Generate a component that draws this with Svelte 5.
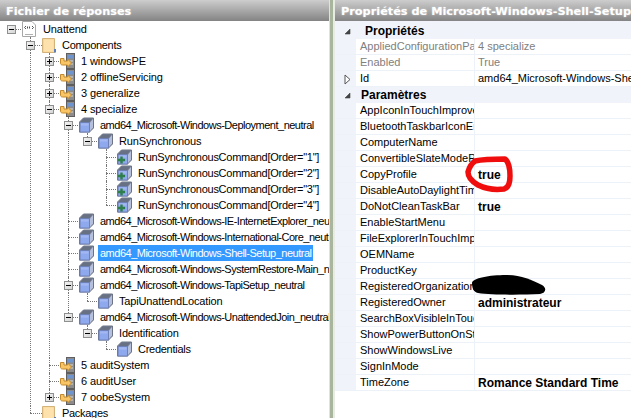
<script>
	// level: depth in the tree, exp: expander state, icon: which glyph to draw
	const nodes = [
		{ level: 0, text: 'Unattend', exp: '-', icon: 'doc' },
		{ level: 1, text: 'Components', exp: '-', icon: 'folder' },
		{ level: 2, text: '1 windowsPE', exp: '+', icon: 'pass' },
		{ level: 2, text: '2 offlineServicing', exp: '+', icon: 'pass' },
		{ level: 2, text: '3 generalize', exp: '+', icon: 'pass' },
		{ level: 2, text: '4 specialize', exp: '-', icon: 'pass' },
		{ level: 3, text: 'amd64_Microsoft-Windows-Deployment_neutral', exp: '-', icon: 'cube' },
		{ level: 4, text: 'RunSynchronous', exp: '-', icon: 'cube' },
		{ level: 5, text: 'RunSynchronousCommand[Order="1"]', icon: 'add' },
		{ level: 5, text: 'RunSynchronousCommand[Order="2"]', icon: 'add' },
		{ level: 5, text: 'RunSynchronousCommand[Order="3"]', icon: 'add' },
		{ level: 5, text: 'RunSynchronousCommand[Order="4"]', icon: 'add' },
		{ level: 3, text: 'amd64_Microsoft-Windows-IE-InternetExplorer_neutral', icon: 'cube' },
		{ level: 3, text: 'amd64_Microsoft-Windows-International-Core_neutral', icon: 'cube' },
		{ level: 3, text: 'amd64_Microsoft-Windows-Shell-Setup_neutral', icon: 'cube', selected: true },
		{ level: 3, text: 'amd64_Microsoft-Windows-SystemRestore-Main_neutral', icon: 'cube' },
		{ level: 3, text: 'amd64_Microsoft-Windows-TapiSetup_neutral', exp: '-', icon: 'cube' },
		{ level: 4, text: 'TapiUnattendLocation', icon: 'cube' },
		{ level: 3, text: 'amd64_Microsoft-Windows-UnattendedJoin_neutral', exp: '-', icon: 'cube' },
		{ level: 4, text: 'Identification', exp: '-', icon: 'cube' },
		{ level: 5, text: 'Credentials', icon: 'cube' },
		{ level: 2, text: '5 auditSystem', icon: 'pass' },
		{ level: 2, text: '6 auditUser', icon: 'pass' },
		{ level: 2, text: '7 oobeSystem', exp: '+', icon: 'pass' },
		{ level: 1, text: 'Packages', icon: 'folder' }
	];

	// Liberation runs a bit wider than the original font, more so on the long names
	const tracking = [-0.1, -0.3, -0.1, -0.5, -0.15, -0.27];

	// a guide runs down at a depth while a later sibling is still to come
	function hasLaterSibling(index, level) {
		for (let i = index + 1; i < nodes.length; i++) {
			if (nodes[i].level < level) return false;
			if (nodes[i].level === level) return true;
		}
		return false;
	}

	const rows = nodes.map((node, index) => {
		const guides = [];
		for (let d = 0; d < node.level; d++) guides.push(hasLaterSibling(index, d));
		return { ...node, guides, last: !hasLaterSibling(index, node.level) };
	});

	const groups = [
		{
			title: 'Propriétés',
			indent: true,
			props: [
				{ name: 'AppliedConfigurationPass', value: '4 specialize', dim: true },
				{ name: 'Enabled', value: 'True', dim: true },
				{ name: 'Id', value: 'amd64_Microsoft-Windows-Shell-Setup_neutral', arrow: true }
			]
		},
		{
			title: 'Paramètres',
			props: [
				{ name: 'AppIconInTouchImprovements' },
				{ name: 'BluetoothTaskbarIconEnabled' },
				{ name: 'ComputerName' },
				{ name: 'ConvertibleSlateModePromptPreference' },
				{ name: 'CopyProfile', value: 'true', bold: true },
				{ name: 'DisableAutoDaylightTimeSet' },
				{ name: 'DoNotCleanTaskBar', value: 'true', bold: true },
				{ name: 'EnableStartMenu' },
				{ name: 'FileExplorerInTouchImprovement' },
				{ name: 'OEMName' },
				{ name: 'ProductKey' },
				{ name: 'RegisteredOrganization' },
				{ name: 'RegisteredOwner', value: 'administrateur', bold: true },
				{ name: 'SearchBoxVisibleInTouchImprovement' },
				{ name: 'ShowPowerButtonOnStartScreen' },
				{ name: 'ShowWindowsLive' },
				{ name: 'SignInMode' },
				{ name: 'TimeZone', value: 'Romance Standard Time', bold: true }
			]
		}
	];
</script>

{#snippet cube()}
	<g transform="translate(1 -.5)">
		<path d="M1.5 5.5 L5.5 1.5 H15.5 V11.5 L11.5 15.5 H1.5 Z" fill="#7d8496" stroke="#6d7486" />
		<rect x="2" y="6" width="9.5" height="9.5" fill="#8fa9ee" stroke="#6f80b4" />
		<path d="M3 7 H10.5 V9 H3 Z" fill="#a3b8f2" />
		<path d="M12 6 L15 2.5 V11 L12 14.5 Z" fill="#b4c0dc" />
		<path d="M2.5 5.5 L5.5 2 H14.5 L11.5 5.5 Z" fill="#687084" />
	</g>
{/snippet}

{#snippet icon(kind)}
	<svg class="icon" width="18" height="16" viewBox="0 0 18 16">
		{#if kind === 'doc'}
			<path d="M2.5 .5 H12 L15.5 4 V15.5 H2.5 Z" fill="#fff" stroke="#a8a8a8" />
			<path d="M5 13.5 H13" stroke="#b0b0b0" />
			<path d="M6 5 L4.5 6.5 L6 8 M12 5 L13.5 6.5 L12 8" fill="none" stroke="#555" />
			<path d="M7 6.5 H11" stroke="#2c4fb0" stroke-width="2" stroke-dasharray="1 1" />
		{:else if kind === 'folder'}
			<path d="M3.5 1.5 H15.5 V15.5 H3.5 Z" fill="#fbd590" stroke="#d3b27c" />
			<path d="M5 2.5 H14.5 V14.5 H5 Z" fill="#fde2ae" />
			<path d="M16 12 V15.5" stroke="#5a7ec0" stroke-width="2" />
		{:else if kind === 'pass'}
			<rect x="8.5" y=".5" width="8" height="15" fill="#8c8c8c" stroke="#5f5f5f" />
			<rect x="10" y="2" width="5" height="3.5" fill="#6f95d0" />
			<rect x="10" y="7.5" width="5" height="1" fill="#d8d8d8" />
			<rect x="10" y="10.5" width="5" height="1" fill="#d8d8d8" />
			<path d="M2.5 5.5 H6 V8 H9.5 V6 L13.5 10 L9.5 14 V12 H4.5 C3 12 2.5 11 2.5 10 Z" fill="#f7c566" stroke="#c48a2c" />
		{:else}
			{@render cube()}
			{#if kind === 'add'}
				<path d="M3 11 H10 M6.5 7.5 V14.5" stroke="#2e7d4c" stroke-width="2.4" />
			{/if}
		{/if}
	</svg>
{/snippet}

<div class="window">
	<section class="tree-panel">
		<h2 class="title">Fichier de réponses</h2>
		<div class="tree">
			{#each rows as row}
				<div class="row">
					<span class="pad"></span>
					{#each row.guides as on}
						<span class="slot" class:guide={on}></span>
					{/each}
					<span class="slot">
						<span class="elbow-h"></span>
						{#if row.level > 0}
							<span class="elbow-v" class:last={row.last}></span>
						{/if}
						{#if row.exp}
							<span class="expander">
								<i class="dash"></i>
								{#if row.exp === '+'}<i class="stem"></i>{/if}
							</span>
						{/if}
					</span>
					{@render icon(row.icon)}
					<span class="label" class:selected={row.selected} style:letter-spacing="{tracking[row.level]}px">{row.text}</span>
				</div>
			{/each}
		</div>
	</section>

	<div class="splitter"></div>

	<section class="props-panel">
		<h2 class="title">Propriétés de Microsoft-Windows-Shell-Setup</h2>
		<div class="grid">
			{#each groups as group}
				<div class="prop group">
					<span class="gutter">
						<svg class="glyph" width="7" height="7" viewBox="0 0 7 7"><path d="M1 6 L6 1 V6 Z" fill="#444" stroke="#444" stroke-width=".6" /></svg>
					</span>
					<span class="group-name" class:indent={group.indent}>{group.title}</span>
				</div>
				{#each group.props as p}
					<div class="prop">
						<span class="gutter">
							{#if p.arrow}
								<svg class="glyph" width="7" height="11" viewBox="0 0 7 11"><path d="M1 1 L6 5.5 L1 10 Z" fill="#fff" stroke="#555" /></svg>
							{/if}
						</span>
						<span class="name" class:dim={p.dim}>{p.name}</span>
						<span class="value" class:dim={p.dim} class:bold={p.bold}>{p.value ?? ''}</span>
					</div>
				{/each}
			{/each}
		</div>

		<!-- marks painted on top of the screenshot -->
		<svg class="scribble" width="60" height="46" viewBox="0 0 60 46">
			<path d="M15 11 C24 9 36 9 45 9 C49 12 50 20 50 26 C50 34 48 38 44 39 C36 40 26 39 18 35 C11 31 8 26 8 22 C9 18 11 14 15 11 Z" fill="none" stroke="#f00d0d" stroke-width="5.5" stroke-linejoin="round" />
		</svg>
		<svg class="redact" width="78" height="20" viewBox="0 0 78 20">
			<path d="M2 8 C2 3 20 0 36 0 C50 0 62 5 72 10 C77 13 76 18 70 19 C50 20 22 20 8 18 C3 17 2 12 2 8 Z" fill="#000" />
		</svg>
	</section>
</div>

<style>
	:global(body) {
		margin: 0;
		background: #fff;
	}

	.window {
		display: flex;
		width: 631px;
		height: 418px;
		overflow: hidden;
		font-family: 'Liberation Sans', Arial, sans-serif;
		font-size: 11px;
		color: #000;
		background: #fff;
	}

	.tree-panel {
		width: 329px;
		flex: none;
		overflow: hidden;
	}

	.splitter {
		width: 6px;
		flex: none;
		box-sizing: border-box;
		background: #a9b59c;
		border-left: 1px solid #dfe3da;
		border-right: 2px solid #e8ebe4;
	}

	.props-panel {
		flex: 1;
		min-width: 0;
		position: relative;
		overflow: hidden;
	}

	.title {
		margin: 0;
		height: 21px;
		padding: 4px 0 0 6px;
		box-sizing: border-box;
		font-family: 'DejaVu Sans', sans-serif;
		font-size: 11.3px;
		font-weight: bold;
		line-height: 15px;
		white-space: nowrap;
		overflow: hidden;
		color: #fff;
		text-shadow: 0 0 2px rgba(255, 255, 255, 0.5);
		background: linear-gradient(#cdcdcd, #848484);
	}

	.tree {
		height: 397px;
		overflow: hidden;
	}

	.row {
		display: flex;
		height: 16px;
		align-items: center;
		white-space: nowrap;
	}

	.pad {
		width: 2px;
		flex: none;
	}

	.slot {
		position: relative;
		width: 19px;
		height: 16px;
		flex: none;
	}

	.slot.guide {
		background: repeating-linear-gradient(#777 0 1px, transparent 1px 2px) 9px 0 / 1px 100% no-repeat;
	}

	.elbow-h {
		position: absolute;
		left: 9px;
		top: 8px;
		width: 12px;
		border-top: 1px dotted #777;
	}

	.elbow-v {
		position: absolute;
		left: 9px;
		top: 0;
		height: 16px;
		border-left: 1px dotted #777;
	}

	.elbow-v.last {
		height: 8px;
	}

	.expander {
		position: absolute;
		left: 5px;
		top: 4px;
		width: 7px;
		height: 7px;
		border: 1px solid #8e8f8f;
		background: linear-gradient(135deg, #f4f4f4, #d4d4d4);
	}

	.dash {
		position: absolute;
		left: 1px;
		top: 3px;
		width: 5px;
		height: 1px;
		background: #000;
	}

	.stem {
		position: absolute;
		left: 3px;
		top: 1px;
		width: 1px;
		height: 5px;
		background: #000;
	}

	.icon {
		flex: none;
		margin-left: -1px;
		position: relative;
	}

	.label {
		margin-left: 3px;
		padding: 0 2px;
		height: 16px;
		line-height: 16px;
	}

	.label.selected {
		background: #3399ff;
		color: #fff;
	}

	.grid {
		padding-top: 2px;
		background: linear-gradient(#f0f4fa 2px, transparent 2px);
	}

	.prop {
		display: flex;
		height: 16px;
		line-height: 15px;
		box-sizing: border-box;
		border-bottom: 1px solid #edf1f8;
		white-space: nowrap;
	}

	.group {
		background: #f0f4fa;
		border-bottom: 0;
		font-size: 12px;
		font-weight: bold;
		line-height: 16px;
	}

	.gutter {
		position: relative;
		width: 21px;
		flex: none;
		background: #f0f4fa;
	}

	.glyph {
		position: absolute;
		left: 9px;
		top: 3px;
	}

	.group .glyph {
		top: 5px;
	}

	.group-name {
		margin-left: 5px;
	}

	.group-name.indent {
		margin-left: 9px;
	}

	.name {
		width: 114px;
		flex: none;
		padding-left: 4px;
		overflow: hidden;
		border-right: 1px solid #edf1f8;
	}

	.value {
		flex: 1;
		min-width: 0;
		padding-left: 3px;
		overflow: hidden;
	}

	.dim {
		color: #808080;
	}

	.bold {
		font-size: 12px;
		font-weight: bold;
		line-height: 17px;
	}

	.scribble {
		position: absolute;
		left: 125px;
		top: 150px;
	}

	.redact {
		position: absolute;
		left: 135px;
		top: 275px;
	}
</style>
